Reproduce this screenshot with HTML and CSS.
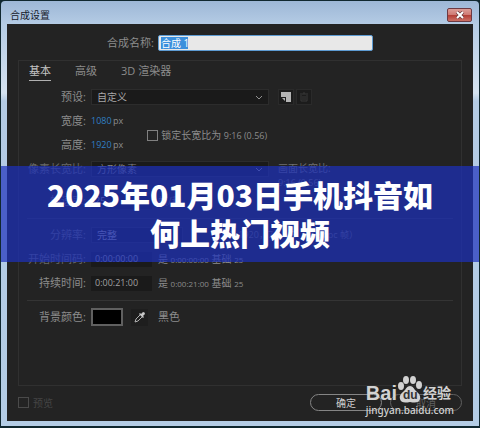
FILE: index.html
```html
<!DOCTYPE html>
<html lang="zh-CN">
<head>
  <meta charset="UTF-8">
  <meta name="viewport" content="width=device-width, initial-scale=1.0">
  <title>合成设置</title>
  <link rel="stylesheet" href="styles.css">
</head>
<body>
  <div class="window">
    <header class="titlebar">
      <span>合成设置</span>
      <button class="close" aria-label="关闭">
        <svg width="10" height="8" viewBox="0 0 10 8"><path d="M2 1l6 6M8 1L2 7" stroke="#6b3a3a" stroke-width="3.4"/><path d="M2 1l6 6M8 1L2 7" stroke="#fff" stroke-width="2"/></svg>
      </button>
    </header>

    <form class="content">
      <div class="name-row">
        <label for="name">合成名称:</label>
        <div class="name-box">
          <input id="name" type="text" value="合成 1" size="4">
        </div>
      </div>

      <div class="panel">
        <nav class="tabs">
          <a href="#basic" class="active">基本</a>
          <a href="#advanced">高级</a>
          <a href="#renderer">3D 渲染器</a>
        </nav>

        <div class="row">
          <label class="label" for="preset">预设:</label>
          <div class="select">
            <select id="preset"><option>自定义</option></select>
            <svg width="8" height="5" viewBox="0 0 8 5"><path d="M1 1l3 3 3-3"/></svg>
          </div>
          <div class="tools">
            <button type="button" aria-label="新建预设">
              <svg width="10" height="10" viewBox="0 0 10 10"><path d="M0 0h10v10H5V5H0z" fill="#b4b4b4"/><path d="M1 6h3v3z" fill="#b4b4b4"/></svg>
            </button>
            <button type="button" aria-label="删除预设" disabled>
              <svg width="10" height="10" viewBox="0 0 10 10"><path d="M1 2h8M4 1h2M2 3v6h6V3M4 4v4M6 4v4" fill="none" stroke="#383838"/></svg>
            </button>
          </div>
        </div>

        <div class="size">
          <div>
            <div class="row">
              <label class="label" for="width">宽度:</label>
              <input class="number" id="width" type="text" value="1080">
              <span class="small">px</span>
            </div>
            <div class="row">
              <label class="label" for="height">高度:</label>
              <input class="number" id="height" type="text" value="1920">
              <span class="small">px</span>
            </div>
          </div>
          <label class="check">
            <input type="checkbox">
            <span>锁定长宽比为 <span class="small">9:16 (0.56)</span></span>
          </label>
        </div>

        <div class="row aspect-row">
          <label class="label dim" for="pixel">像素长宽比:</label>
          <div class="select">
            <select id="pixel"><option>方形像素</option></select>
            <svg width="8" height="5" viewBox="0 0 8 5"><path d="M1 1l3 3 3-3"/></svg>
          </div>
          <div class="aspect">画面长宽比:<br><span class="small">9:16 (0.56)</span></div>
        </div>

        <div class="row">
          <label class="label dim" for="fps">帧速率:</label>
          <input class="field" id="fps" type="text" value="25">
          <span class="note dim">帧/秒</span>
        </div>

        <hr>

        <div class="row">
          <label class="label dim" for="res">分辨率:</label>
          <div class="select short">
            <select id="res"><option>完整</option></select>
          </div>
          <span class="note dim small res-info">1080x1920，7.9 MB（每 8bpc 帧）</span>
        </div>
        <div class="row">
          <label class="label dim" for="start">开始时间码:</label>
          <input class="field" id="start" type="text" value="0:00:00:00">
          <span class="note">是 <span class="time">0:00:00:00</span> 基础 <span class="time">25</span></span>
        </div>
        <div class="row">
          <label class="label" for="duration">持续时间:</label>
          <input class="field" id="duration" type="text" value="0:00:21:00">
          <span class="note">是 <span class="time">0:00:21:00</span> 基础 <span class="time">25</span></span>
        </div>

        <hr>

        <div class="row">
          <span class="label">背景颜色:</span>
          <button class="swatch" type="button" aria-label="背景颜色"></button>
          <button class="dropper" type="button" aria-label="吸管">
            <svg width="14" height="14" viewBox="0 0 14 14"><path d="M2 12l1-3 5-5 2 2-5 5z" fill="none" stroke="#b0b0b0"/><path d="M6 4l4 4 1-1-1-1 2-2a2 2 0 0 0-2-2L8 4 7 3z" fill="#c8c8c8"/></svg>
          </button>
          <span>黑色</span>
        </div>
      </div>

      <footer class="footer">
        <label class="check preview">
          <input type="checkbox" disabled>
          <span>预览</span>
        </label>
        <button class="pill" type="button">确定</button>
        <button class="pill cancel" type="button">取消</button>
      </footer>
    </form>
  </div>

  <h1 class="banner">2025年01月03日手机抖音如何上热门视频</h1>

  <div class="watermark">
    <div class="brand">
      <span>Bai</span>
      <span class="paw">
        <svg width="26" height="28" viewBox="0 0 26 28">
          <g fill="#d2d2d2">
            <ellipse cx="4" cy="10" rx="3" ry="4"/>
            <ellipse cx="9" cy="4" rx="3" ry="4"/>
            <ellipse cx="16" cy="4" rx="3" ry="4"/>
            <ellipse cx="22" cy="9" rx="3" ry="4"/>
            <path d="M13 10c-3 0-4 3-6 5s-5 4-4 8c1 4 5 4 10 3 5 1 9 1 10-3 1-4-2-6-4-8s-3-5-6-5z"/>
          </g>
        </svg>
        <span class="du">du</span>
      </span>
      <span class="jingyan">经验</span>
    </div>
    <div class="site">jingyan.baidu.com</div>
  </div>
</body>
</html>
```

FILE: styles.css
```css
:root {
  --bg: #232323;
  --dark: #1a1a1a;
  --line: #303030;
  --text: #8c8c8c;
  --blue: #2f7fc4;
}

* {
  box-sizing: border-box;
  margin: 0;
  padding: 0;
}

body {
  position: relative;
  min-height: 100vh;
  display: flex;
  padding: 1px 1px 2px;
  background: #10272f;
  color: var(--text);
  font-family: "Open Sans", "Noto Sans CJK SC", sans-serif;
  font-size: 11px;
  line-height: 16px;
}

input, select, button {
  font: inherit;
  color: inherit;
  background: none;
  border: none;
  appearance: none;
}

.window {
  flex: 1;
  display: flex;
  flex-direction: column;
  padding: 0 6px 5px;
  border-radius: 4px 4px 0 0;
  background: linear-gradient(#9db7d6, #b5cce5 24px, #d5e2f0 92px, #b4cbe4 100px, #b4cde6);
}

.titlebar {
  display: flex;
  align-items: center;
  justify-content: space-between;
  height: 23px;
  padding: 4px 1px 0 3px;
  color: #16202c;
  font-size: 10px;
}

.close {
  display: flex;
  align-items: center;
  justify-content: center;
  width: 25px;
  height: 14px;
  border: 1px solid #6d3a43;
  border-radius: 2px;
  background: linear-gradient(#dc9d97, #cf7a73 48%, #b23b33 50%, #cc7166);
}

.content {
  flex: 1;
  display: flex;
  flex-direction: column;
  padding: 11px 11px 10px;
  background: var(--bg);
}

.name-row {
  display: flex;
  align-items: center;
  gap: 4px;
  padding: 0 89px;
}

.name-row label {
  white-space: nowrap;
}

.name-box {
  flex: 1;
  padding: 1px 2px;
  border: 1px solid #5d9bd2;
  border-radius: 2px;
  background: #e8e8e8;
}

.name-box input {
  display: block;
  width: 27px;
  height: 12px;
  background: #3c8fdc;
  color: #fff;
  font-size: 10px;
}

.panel {
  flex: 1;
  margin-top: 9px;
  padding: 0 8px;
  border: 1px solid var(--line);
}

.tabs {
  display: flex;
  gap: 24px;
  height: 24px;
  padding: 2px 2px 0;
}

.tabs a {
  height: 18px;
  color: var(--text);
  text-decoration: none;
}

.tabs .active {
  color: #c4c4c4;
  border-bottom: 1px solid #b0b0b0;
}

.row {
  display: flex;
  align-items: center;
  height: 24px;
  white-space: nowrap;
}

.label {
  width: 59px;
  margin-right: 5px;
  text-align: right;
}

.dim {
  color: #686868;
}

.small {
  font-size: 9px;
}

.time {
  font-size: 8px;
}

.select {
  display: flex;
  align-items: center;
  width: 178px;
  height: 16px;
  padding: 0 5px;
  border: 1px solid #2c2c2c;
  background: var(--dark);
}

.select select {
  flex: 1;
  height: 14px;
  color: #a8a8a8;
  font-size: 10px;
  line-height: 14px;
}

.select svg {
  fill: none;
  stroke: #909090;
}

.select.short {
  width: 92px;
}

.tools {
  display: flex;
  gap: 2px;
  margin-left: 9px;
}

.tools button {
  display: flex;
  align-items: center;
  justify-content: center;
  width: 16px;
  height: 16px;
  border: 1px solid #2a2a2a;
  background: #1c1c1c;
}

.size {
  display: flex;
  align-items: center;
  gap: 24px;
}

.number {
  width: 22px;
  color: var(--blue);
  font-size: 9px;
}

.check {
  display: flex;
  align-items: center;
  gap: 3px;
  padding-top: 4px;
  font-size: 10px;
}

.check input {
  width: 11px;
  height: 11px;
  border: 1px solid #808080;
}

.aspect-row {
  height: 32px;
  padding-top: 4px;
  align-items: flex-start;
}

.aspect {
  margin-left: 9px;
  color: #707070;
  font-size: 10px;
  line-height: 14px;
}

.aspect-row select {
  color: #808080;
}

.field {
  width: 61px;
  height: 15px;
  padding: 0 4px;
  background: var(--dark);
  color: #a0a0a0;
  font-size: 9px;
}

.note {
  margin-left: 6px;
  font-size: 10px;
}

.note.res-info {
  margin-left: 30px;
  font-size: 9px;
}

hr {
  margin: 5px 0 4px;
  border: none;
  border-top: 1px solid #343434;
}

.swatch {
  width: 32px;
  height: 18px;
  border: 2px solid #606060;
  background: #000;
}

.dropper {
  display: flex;
  align-items: center;
  justify-content: center;
  width: 17px;
  height: 17px;
  margin: 0 10px 0 8px;
  background: #1e1e1e;
}

.footer {
  display: flex;
  align-items: center;
  gap: 8px;
  padding-top: 8px;
}

.preview {
  margin-right: auto;
  padding: 0;
  gap: 4px;
  color: #454545;
}

.preview input {
  border-color: #4a4a4a;
}

.pill {
  width: 72px;
  height: 17px;
  border: 1px solid #858585;
  border-radius: 9px;
  color: #d0d0d0;
  font-size: 10px;
  line-height: 14px;
}

.cancel {
  color: #606060;
  border-color: #606060;
}

.banner {
  position: absolute;
  top: 166px;
  left: 1px;
  right: 1px;
  padding: 9px 40px 11px;
  background: rgba(28, 49, 190, 0.7);
  color: #fff;
  font-family: "Noto Sans CJK SC", sans-serif;
  font-size: 30px;
  font-weight: 900;
  line-height: 38px;
  text-align: center;
}

.watermark {
  position: absolute;
  right: 26px;
  bottom: 11px;
  color: #d2d2d2;
}

.brand {
  display: flex;
  align-items: flex-end;
  height: 28px;
  font-family: "Liberation Sans", "Noto Sans CJK SC", sans-serif;
  font-size: 20px;
  font-weight: bold;
  line-height: 22px;
}

.paw {
  position: relative;
  height: 28px;
}

.du {
  position: absolute;
  left: 6px;
  bottom: 2px;
  color: #333;
  font-size: 12px;
  line-height: 14px;
}

.jingyan {
  font-size: 14px;
}

.site {
  font-family: "Noto Sans", sans-serif;
  font-size: 10px;
  font-weight: 500;
  line-height: 13px;
}
```
